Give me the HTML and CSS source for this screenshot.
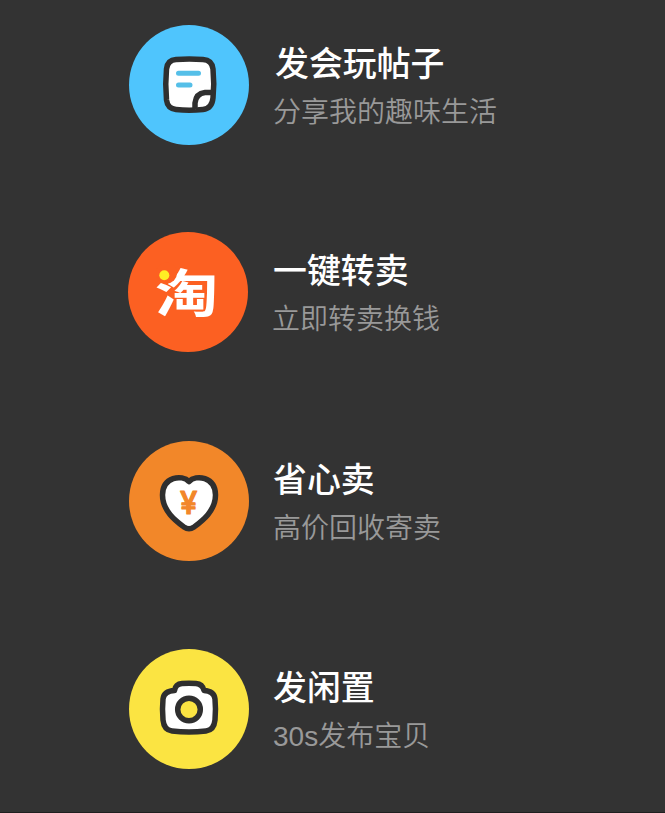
FILE: index.html
```
<!DOCTYPE html>
<html lang="zh-CN">

<head>
  <meta charset="UTF-8">
  <title>发布</title>
  <meta name="viewport" content="width=device-width, initial-scale=1.0">
  <link rel="stylesheet" href="styles.css">
</head>

<body>
  <main class="menu">

    <!-- POST -->
    <a class="item item--post">
      <svg class="item__icon" viewBox="0 0 120 120">
        <circle class="disc" cx="60" cy="60" r="60"></circle>
        <path class="shape" d="M47 34.5Q60 33.5 74 34.5Q83 35 84 44Q85.5 59 84 73Q83 83.5 74 84.5Q60 86 47 84.5Q38.500 83.500 37.500 75Q36 59 37.500 44Q38.500 35 47 34.500Z"></path>
        <path class="shape" d="M66 84.500V78Q67 68.500 76 67.500H84"></path>
        <path class="note-line" d="M49.500 48.300H69.500M49.500 60H61"></path>
      </svg>
      <div class="item__text">
        <h2 class="item__title">发会玩帖子</h2>
        <p class="item__desc">分享我的趣味生活</p>
      </div>
    </a>

    <!-- RESALE -->
    <a class="item item--resale">
      <svg class="item__icon" viewBox="0 0 120 120">
        <circle class="disc" cx="60" cy="60" r="60"></circle>
        <text class="tao" transform="translate(27 80) scale(1.15 .94)">淘</text>
        <circle class="disc" cx="38.500" cy="41" r="10.500"></circle>
        <circle class="tao-dot" cx="36.300" cy="43.300" r="5"></circle>
      </svg>
      <div class="item__text">
        <h2 class="item__title">一键转卖</h2>
        <p class="item__desc">立即转卖换钱</p>
      </div>
    </a>

    <!-- RECYCLE -->
    <a class="item item--recycle">
      <svg class="item__icon" viewBox="0 0 120 120">
        <circle class="disc" cx="60" cy="60" r="60"></circle>
        <path class="shape" d="M60 40.500C53 33 33.500 36 33.500 54C33.500 70 47 80 55 86Q60 89.500 65 86C73 80 86.500 70 86.500 54C86.500 36 67 33 60 40.500Z"></path>
        <text class="yuan" transform="translate(59.500 73)">¥</text>
      </svg>
      <div class="item__text">
        <h2 class="item__title">省心卖</h2>
        <p class="item__desc">高价回收寄卖</p>
      </div>
    </a>

    <!-- IDLE GOODS -->
    <a class="item item--idle">
      <svg class="item__icon" viewBox="0 0 120 120">
        <circle class="disc" cx="60" cy="60" r="60"></circle>
        <path class="shape" d="M45.500 41.500Q46.500 35 53 34.500Q60 34 67 34.500Q73.500 35 75 41.500Q85 42 86 50Q87 60 86 71Q85 81 77 82Q60 84 43 82Q35 81 34 71Q33 60 34 50Q35 42 45.500 41.500Z"></path>
        <circle class="lens" cx="60" cy="60.500" r="11.300"></circle>
      </svg>
      <div class="item__text">
        <h2 class="item__title">发闲置</h2>
        <p class="item__desc">30s发布宝贝</p>
      </div>
    </a>

  </main>
</body>

</html>
```
FILE: styles.css
```
:root {
  --bgColor: #333;
  --edgeColor: #1f1f1f;
  --titleColor: #fff;
  --descColor: #999;
  --inkColor: #2f2f2f;
  --postColor: #4fc5fd;
  --resaleColor: #fc6022;
  --recycleColor: #f28729;
  --idleColor: #fbe442;
}

* {
  box-sizing: border-box;
}

body {
  background-color: var(--bgColor);
  font-family: "Noto Sans CJK SC", sans-serif;
  margin: 0;
}

.menu {
  border-bottom: 1px solid var(--edgeColor);
  display: flex;
  flex-direction: column;
  height: 813px;
  padding: 25px 0 0 129px;
}

.item {
  align-items: flex-start;
  display: flex;
  gap: 24px;
  height: 120px;
  margin-bottom: 88px;
}

.item--post {
  --discColor: var(--postColor);
  margin-bottom: 87px;
}

.item--resale {
  --discColor: var(--resaleColor);
  margin-bottom: 89px;
  margin-left: -1px;
}

.item--recycle {
  --discColor: var(--recycleColor);
}

.item--idle {
  --discColor: var(--idleColor);
  margin-bottom: 0;
}

.item__icon {
  flex: none;
  height: 120px;
  width: 120px;
}

.item__text {
  padding-top: 14px;
}

.item__title {
  color: var(--titleColor);
  font-size: 33.9px;
  font-weight: 500;
  line-height: 46px;
  margin: 0;
}

.item--post .item__title {
  padding-left: 2px;
}

.item--resale .item__title {
  padding-left: 1px;
}

.item__desc {
  color: var(--descColor);
  font-family: "Liberation Sans", "Noto Sans CJK SC", sans-serif;
  font-size: 28px;
  font-weight: 350;
  line-height: 40px;
  margin: 8px 0 0;
}

.disc {
  fill: var(--discColor);
}

.shape {
  fill: #fff;
  stroke: var(--inkColor);
  stroke-linejoin: round;
  stroke-width: 5.5;
}

.note-line {
  fill: none;
  stroke: #55bfe8;
  stroke-linecap: round;
  stroke-width: 5;
}

.tao {
  fill: #fff;
  font-size: 55px;
  font-weight: 700;
}

.tao-dot {
  fill: #ffed24;
}

.yuan {
  fill: var(--recycleColor);
  font-family: Inter, sans-serif;
  font-size: 31px;
  font-weight: 500;
  stroke: var(--recycleColor);
  stroke-linejoin: round;
  stroke-width: 1.2;
  text-anchor: middle;
}

.lens {
  fill: var(--idleColor);
  stroke: var(--inkColor);
  stroke-width: 5.5;
}
```
